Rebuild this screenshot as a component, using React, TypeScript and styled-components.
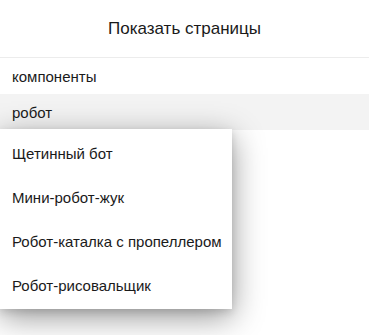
import React from "react";
import styled, { createGlobalStyle } from "styled-components";

const GlobalStyle = createGlobalStyle`
  html, body {
    margin: 0;
    padding: 0;
    background: #ffffff;
  }
  body {
    font-family: "Liberation Sans", Arial, sans-serif;
    color: #222222;
  }
`;

const Page = styled.div`
  position: relative;
  width: 369px;
  height: 335px;
  overflow: hidden;
  background: #ffffff;
`;

const Header = styled.div`
  height: 57px;
  display: flex;
  align-items: center;
  justify-content: center;
  font-size: 17px;
  color: #1a1a1a;
  border-bottom: 1px solid #ececec;
`;

const Row = styled.div<{ $active?: boolean }>`
  height: 36px;
  display: flex;
  align-items: center;
  padding: 0 12px;
  font-size: 15px;
  color: #1a1a1a;
  background: ${(p) => (p.$active ? "#f3f3f3" : "#ffffff")};
`;

const Menu = styled.div`
  position: absolute;
  left: 0;
  top: 129px;
  width: 232px;
  padding: 2px 0;
  background: #ffffff;
  box-shadow: 0 8px 30px rgba(0, 0, 0, 0.42), 0 3px 8px rgba(0, 0, 0, 0.12);
`;

const MenuItem = styled.div`
  height: 44px;
  display: flex;
  align-items: center;
  padding: 0 12px;
  font-size: 15px;
  color: #1a1a1a;
  white-space: nowrap;
`;

const items = [
  "Щетинный бот",
  "Мини-робот-жук",
  "Робот-каталка с пропеллером",
  "Робот-рисовальщик",
];

export default function App() {
  return (
    <>
      <GlobalStyle />
      <Page>
        <Header>Показать страницы</Header>
        <Row>компоненты</Row>
        <Row $active>робот</Row>
        <Menu>
          {items.map((t) => (
            <MenuItem key={t}>{t}</MenuItem>
          ))}
        </Menu>
      </Page>
    </>
  );
}
